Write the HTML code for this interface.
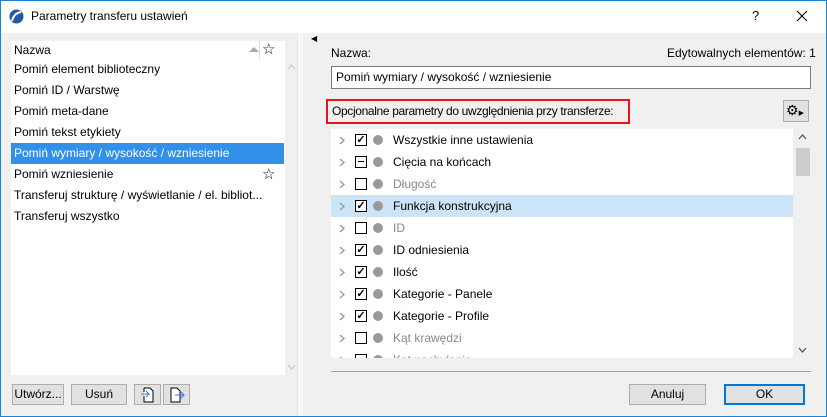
<!DOCTYPE html><html><head><meta charset="utf-8"><style>
*{box-sizing:border-box;margin:0;padding:0}
body{width:827px;height:417px;overflow:hidden;font-family:"Liberation Sans",sans-serif;font-size:12px;color:#000;background:#f0f0f0;position:relative}
.a{position:absolute}
.win{left:0;top:0;width:827px;height:417px;border:1px solid #1883d7}
.row{position:absolute;left:0;height:21px;line-height:21px;padding-left:3px;width:273px;white-space:nowrap}
.tr{position:absolute;left:0;width:462px;height:22px;line-height:22px}
.cb{position:absolute;left:24px;top:5px;width:12px;height:12px;border:1px solid #000;background:#fff;font-size:11px;line-height:10px;text-align:center;font-weight:bold}
.dot{position:absolute;left:42px;top:6px;width:10px;height:10px;border-radius:50%;background:#999}
.tx{position:absolute;left:62px;top:0}
.chev{position:absolute;left:8px;top:7px}
.btn{position:absolute;height:21px;border:1px solid #adadad;background:#e1e1e1;text-align:center;line-height:19px}
.g{color:#888}
</style></head><body>
<div class="a win"></div>
<div class="a" style="left:1px;top:1px;width:825px;height:32px;background:#fff"></div>
<svg class="a" style="left:9px;top:9px" width="15" height="15"><circle cx="7.5" cy="7.5" r="7" fill="#1e5aa8"/><path d="M3 12 Q5 4 12 3" stroke="#fff" stroke-width="2" fill="none"/></svg>
<div class="a" style="left:31px;top:9px;font-size:12px">Parametry transferu ustawień</div>
<div class="a" style="left:752px;top:8px;font-size:13px">?</div>
<svg class="a" style="left:796px;top:10px" width="12" height="12"><path d="M1 1L11 11M11 1L1 11" stroke="#000" stroke-width="1.1"/></svg>
<div class="a" style="left:11px;top:41px;width:274px;height:334px;background:#fff">
<div class="row" style="top:0;height:18px;line-height:18px;width:274px;background:#fff">Nazwa</div>
<div class="a" style="left:238px;top:6px;width:0;height:0;border-left:5px solid transparent;border-right:5px solid transparent;border-bottom:5px solid #aaa"></div>
<div class="a" style="left:248px;top:0;width:1px;height:18px;background:#ddd"></div>
<div class="a" style="left:251px;top:-1px;font-size:15px">☆</div>
<div class="row" style="top:18px">Pomiń element biblioteczny</div>
<div class="row" style="top:39px">Pomiń ID / Warstwę</div>
<div class="row" style="top:60px">Pomiń meta-dane</div>
<div class="row" style="top:81px">Pomiń tekst etykiety</div>
<div class="row" style="top:102px;background:#3390e8;color:#fff">Pomiń wymiary / wysokość / wzniesienie</div>
<div class="row" style="top:123px">Pomiń wzniesienie</div>
<div class="a" style="left:251px;top:124px;font-size:15px">☆</div>
<div class="row" style="top:144px">Transferuj strukturę / wyświetlanie / el. bibliot...</div>
<div class="row" style="top:165px">Transferuj wszystko</div>
</div>
<svg class="a" style="left:287px;top:64px" width="9" height="6"><path d="M1 5L4.5 1L8 5" stroke="#ccc" fill="none" stroke-width="1.3"/></svg>
<svg class="a" style="left:287px;top:364px" width="9" height="6"><path d="M1 1L4.5 5L8 1" stroke="#ccc" fill="none" stroke-width="1.3"/></svg>
<div class="btn" style="left:12px;top:384px;width:52px">Utwórz...</div>
<div class="btn" style="left:71px;top:384px;width:56px">Usuń</div>
<div class="btn" style="left:134px;top:384px;width:27px"><svg width="14" height="16" style="margin-top:2px"><path d="M3 1H9L12 4V15H3V9M3 5V1" stroke="#000" fill="#fff"/><path d="M0 7H8M5 4L8 7L5 10" stroke="#2a7de0" fill="none"/></svg></div>
<div class="btn" style="left:163px;top:384px;width:27px"><svg width="16" height="16" style="margin-top:2px"><path d="M2 1H8L11 4V15H2Z" stroke="#000" fill="#fff"/><path d="M6 8H15M12 5L15 8L12 11" stroke="#2a7de0" fill="none"/></svg></div>
<div class="a" style="left:297px;top:33px;width:6px;height:383px;background:#f7f7f7;border-left:1px solid #e6e6e6"></div>
<div class="a" style="left:311px;top:34px;font-size:8px">◀</div>
<div class="a" style="left:331px;top:46px">Nazwa:</div>
<div class="a" style="left:667px;top:46px">Edytowalnych elementów: 1</div>
<div class="a" style="left:331px;top:66px;width:480px;height:23px;border:1px solid #7a7a7a;background:#fff;padding-left:4px;line-height:21px">Pomiń wymiary / wysokość / wzniesienie</div>
<div class="a" style="left:326px;top:99px;width:304px;height:25px;border:2px solid #e8141b;padding-left:4px;line-height:20px;white-space:nowrap;letter-spacing:-0.35px;overflow:hidden">Opcjonalne parametry do uwzględnienia przy transferze:</div>
<div class="a" style="left:783px;top:100px;width:26px;height:22px;border:1px solid #adadad;background:#e1e1e1;font-size:14px;line-height:19px;padding-left:2px">⚙<span style="font-size:7px">▶</span></div>
<div class="a" style="left:331px;top:129px;width:462px;height:229px;background:#fff;overflow:hidden">
<div class="tr" style="top:0"><svg class="chev" width="6" height="9"><path d="M1 1L5 4.5L1 8" stroke="#999" fill="none" stroke-width="1.3"/></svg><div class="cb">✓</div><div class="dot"></div><div class="tx">Wszystkie inne ustawienia</div></div>
<div class="tr" style="top:22px"><svg class="chev" width="6" height="9"><path d="M1 1L5 4.5L1 8" stroke="#999" fill="none" stroke-width="1.3"/></svg><div class="cb"><div style="margin:4px 2px;width:6px;height:1px;background:#000"></div></div><div class="dot"></div><div class="tx">Cięcia na końcach</div></div>
<div class="tr" style="top:44px"><svg class="chev" width="6" height="9"><path d="M1 1L5 4.5L1 8" stroke="#999" fill="none" stroke-width="1.3"/></svg><div class="cb"></div><div class="dot"></div><div class="tx g">Długość</div></div>
<div class="tr" style="top:66px;background:#cce4f7"><svg class="chev" width="6" height="9"><path d="M1 1L5 4.5L1 8" stroke="#999" fill="none" stroke-width="1.3"/></svg><div class="cb">✓</div><div class="dot"></div><div class="tx">Funkcja konstrukcyjna</div></div>
<div class="tr" style="top:88px"><svg class="chev" width="6" height="9"><path d="M1 1L5 4.5L1 8" stroke="#999" fill="none" stroke-width="1.3"/></svg><div class="cb"></div><div class="dot"></div><div class="tx g">ID</div></div>
<div class="tr" style="top:110px"><svg class="chev" width="6" height="9"><path d="M1 1L5 4.5L1 8" stroke="#999" fill="none" stroke-width="1.3"/></svg><div class="cb">✓</div><div class="dot"></div><div class="tx">ID odniesienia</div></div>
<div class="tr" style="top:132px"><svg class="chev" width="6" height="9"><path d="M1 1L5 4.5L1 8" stroke="#999" fill="none" stroke-width="1.3"/></svg><div class="cb">✓</div><div class="dot"></div><div class="tx">Ilość</div></div>
<div class="tr" style="top:154px"><svg class="chev" width="6" height="9"><path d="M1 1L5 4.5L1 8" stroke="#999" fill="none" stroke-width="1.3"/></svg><div class="cb">✓</div><div class="dot"></div><div class="tx">Kategorie - Panele</div></div>
<div class="tr" style="top:176px"><svg class="chev" width="6" height="9"><path d="M1 1L5 4.5L1 8" stroke="#999" fill="none" stroke-width="1.3"/></svg><div class="cb">✓</div><div class="dot"></div><div class="tx">Kategorie - Profile</div></div>
<div class="tr" style="top:198px"><svg class="chev" width="6" height="9"><path d="M1 1L5 4.5L1 8" stroke="#999" fill="none" stroke-width="1.3"/></svg><div class="cb"></div><div class="dot"></div><div class="tx g">Kąt krawędzi</div></div>
<div class="tr" style="top:220px"><svg class="chev" width="6" height="9"><path d="M1 1L5 4.5L1 8" stroke="#999" fill="none" stroke-width="1.3"/></svg><div class="cb"></div><div class="dot"></div><div class="tx g">Kąt nachylenia</div></div>
</div>
<div class="a" style="left:796px;top:148px;width:14px;height:28px;background:#cdcdcd"></div>
<svg class="a" style="left:798px;top:134px" width="9" height="6"><path d="M1 5L4.5 1L8 5" stroke="#555" fill="none" stroke-width="1.3"/></svg>
<svg class="a" style="left:798px;top:347px" width="9" height="6"><path d="M1 1L4.5 5L8 1" stroke="#555" fill="none" stroke-width="1.3"/></svg>
<div class="a" style="left:331px;top:371px;width:480px;height:1px;background:#a0a0a0"></div>
<div class="btn" style="left:629px;top:384px;width:77px">Anuluj</div>
<div class="btn" style="left:724px;top:384px;width:81px;border:2px solid #0078d7;line-height:17px">OK</div>
</body></html>
